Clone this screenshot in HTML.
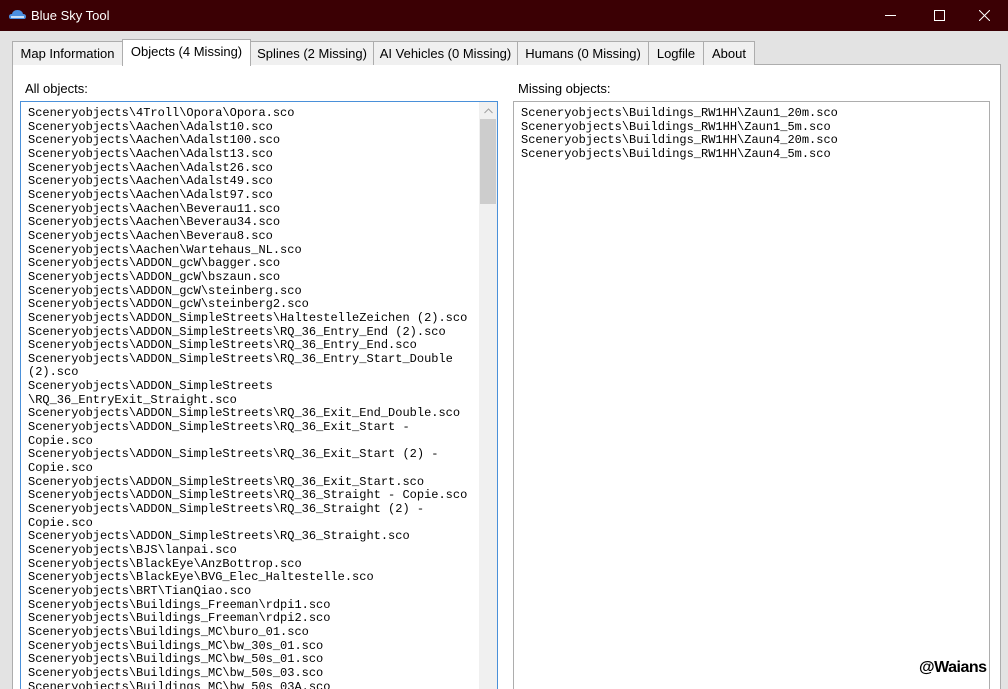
<!DOCTYPE html>
<html><head><meta charset="utf-8"><style>
*{margin:0;padding:0;box-sizing:border-box}
html,body{width:1008px;height:689px;overflow:hidden}
body{background:#e3e3e3;font-family:"Liberation Sans",sans-serif;position:relative}
#title{position:absolute;left:0;top:0;width:1008px;height:31px;background:#3b0004;color:#fff;font-size:13px}
#title .t{position:absolute;left:31px;top:8px}
.ctl{position:absolute;top:5px;color:#fff;font-size:14px}
.tab{position:absolute;top:41px;height:24px;border:1px solid #adadad;border-bottom:none;background:#f0f0f0;font-size:13px;padding-top:4px;text-align:center;color:#000}
.tab.sel{top:39px;height:27px;background:#fff;z-index:2;padding-top:4px}
#panel{position:absolute;left:12px;top:64px;width:989px;height:640px;background:#fff;border:1px solid #adadad}
.lbl{position:absolute;font-size:13px;color:#000}
.box{position:absolute;background:#fff;overflow:hidden}
.list{font-family:"Liberation Mono",monospace;font-size:12px;line-height:13.65px;color:#000;white-space:pre;position:absolute;left:7px;top:5px}
</style></head><body>
<div id="title">
<svg style="position:absolute;left:9px;top:9px" width="17" height="11" viewBox="0 0 17 11"><path d="M2 10 Q0 10 0 7.5 Q0 5 3 5 Q4 1 8.5 1 Q13 1 14 5 Q17 5 17 7.5 Q17 10 15 10Z" fill="#4a8ee0"/><path d="M2 8 H15" stroke="#fff" stroke-width="1.4"/></svg>
<span class="t">Blue Sky Tool</span>
<span style="position:absolute;left:885px;top:15px;width:11px;height:1px;background:#fff"></span>
<span style="position:absolute;left:934px;top:10px;width:11px;height:11px;border:1px solid #fff"></span>
<svg style="position:absolute;left:979px;top:10px" width="11" height="11"><path d="M0 0L11 11M11 0L0 11" stroke="#fff" stroke-width="1"/></svg>
</div>
<div id="panel"></div>
<div class="tab" style="left:12px;width:111px">Map Information</div>
<div class="tab sel" style="left:122px;width:129px">Objects (4 Missing)</div>
<div class="tab" style="left:250px;width:124px">Splines (2 Missing)</div>
<div class="tab" style="left:373px;width:145px">AI Vehicles (0 Missing)</div>
<div class="tab" style="left:517px;width:132px">Humans (0 Missing)</div>
<div class="tab" style="left:648px;width:56px">Logfile</div>
<div class="tab" style="left:703px;width:52px">About</div>
<div class="lbl" style="left:25px;top:81px">All objects:</div>
<div class="lbl" style="left:518px;top:81px">Missing objects:</div>
<div class="box" style="left:20px;top:101px;width:478px;height:600px;border:1px solid #4a90d9">
<div class="list">Sceneryobjects\4Troll\Opora\Opora.sco
Sceneryobjects\Aachen\Adalst10.sco
Sceneryobjects\Aachen\Adalst100.sco
Sceneryobjects\Aachen\Adalst13.sco
Sceneryobjects\Aachen\Adalst26.sco
Sceneryobjects\Aachen\Adalst49.sco
Sceneryobjects\Aachen\Adalst97.sco
Sceneryobjects\Aachen\Beverau11.sco
Sceneryobjects\Aachen\Beverau34.sco
Sceneryobjects\Aachen\Beverau8.sco
Sceneryobjects\Aachen\Wartehaus_NL.sco
Sceneryobjects\ADDON_gcW\bagger.sco
Sceneryobjects\ADDON_gcW\bszaun.sco
Sceneryobjects\ADDON_gcW\steinberg.sco
Sceneryobjects\ADDON_gcW\steinberg2.sco
Sceneryobjects\ADDON_SimpleStreets\HaltestelleZeichen (2).sco
Sceneryobjects\ADDON_SimpleStreets\RQ_36_Entry_End (2).sco
Sceneryobjects\ADDON_SimpleStreets\RQ_36_Entry_End.sco
Sceneryobjects\ADDON_SimpleStreets\RQ_36_Entry_Start_Double
(2).sco
Sceneryobjects\ADDON_SimpleStreets
\RQ_36_EntryExit_Straight.sco
Sceneryobjects\ADDON_SimpleStreets\RQ_36_Exit_End_Double.sco
Sceneryobjects\ADDON_SimpleStreets\RQ_36_Exit_Start -
Copie.sco
Sceneryobjects\ADDON_SimpleStreets\RQ_36_Exit_Start (2) -
Copie.sco
Sceneryobjects\ADDON_SimpleStreets\RQ_36_Exit_Start.sco
Sceneryobjects\ADDON_SimpleStreets\RQ_36_Straight - Copie.sco
Sceneryobjects\ADDON_SimpleStreets\RQ_36_Straight (2) -
Copie.sco
Sceneryobjects\ADDON_SimpleStreets\RQ_36_Straight.sco
Sceneryobjects\BJS\lanpai.sco
Sceneryobjects\BlackEye\AnzBottrop.sco
Sceneryobjects\BlackEye\BVG_Elec_Haltestelle.sco
Sceneryobjects\BRT\TianQiao.sco
Sceneryobjects\Buildings_Freeman\rdpi1.sco
Sceneryobjects\Buildings_Freeman\rdpi2.sco
Sceneryobjects\Buildings_MC\buro_01.sco
Sceneryobjects\Buildings_MC\bw_30s_01.sco
Sceneryobjects\Buildings_MC\bw_50s_01.sco
Sceneryobjects\Buildings_MC\bw_50s_03.sco
Sceneryobjects\Buildings_MC\bw_50s_03A.sco</div>
<div style="position:absolute;left:458px;top:0;width:18px;height:600px;background:#f0f0f0"></div>
<div style="position:absolute;left:459px;top:17px;width:16px;height:85px;background:#cdcdcd"></div>
<svg style="position:absolute;left:463px;top:6px" width="9" height="6"><path d="M0.5 5L4.5 1L8.5 5" stroke="#a0a0a0" fill="none"/></svg>
</div>
<div class="box" style="left:513px;top:101px;width:477px;height:600px;border:1px solid #adadad">
<div class="list">Sceneryobjects\Buildings_RW1HH\Zaun1_20m.sco
Sceneryobjects\Buildings_RW1HH\Zaun1_5m.sco
Sceneryobjects\Buildings_RW1HH\Zaun4_20m.sco
Sceneryobjects\Buildings_RW1HH\Zaun4_5m.sco</div>
</div>
<div style="position:absolute;left:919px;top:659px;font-family:'Liberation Sans',sans-serif;font-weight:bold;font-size:16px;color:#000;letter-spacing:-0.5px;text-shadow:1px 0 #fff,-1px 0 #fff,0 1px #fff,0 -1px #fff">@Waians</div>
</body></html>
